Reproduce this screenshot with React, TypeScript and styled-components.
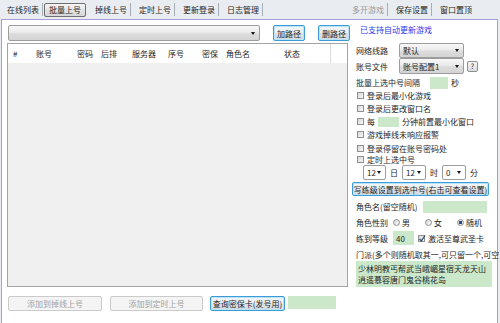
import * as React from 'react';
import styled, { createGlobalStyle } from 'styled-components';

const GlobalStyle = createGlobalStyle`
  html, body {
    margin: 0;
    padding: 0;
    background: #ffffff;
  }
  body {
    font-family: "Noto Sans CJK SC", "Noto Sans", sans-serif;
    font-size: 8px;
    color: #1e1e1e;
  }
`;

const Window = styled.div`
  width: 500px;
  height: 323px;
  background: #e9edf2;
  display: flex;
  flex-direction: column;
  overflow: hidden;
`;

const TabBar = styled.div`
  height: 19px;
  flex: none;
  display: flex;
  align-items: center;
  padding-right: 25px;
`;

const Tab = styled.div<{ $selected?: boolean; $muted?: boolean }>`
  line-height: 13px;
  height: 14px;
  box-sizing: border-box;
  white-space: nowrap;
  color: ${p => (p.$muted ? '#9a9a9a' : '#1e1e1e')};
  padding: ${p => (p.$selected ? '0 4px' : '0 3px 0 8px')};
  margin: ${p => (p.$selected ? '0 1px' : '0')};
  border: ${p => (p.$selected ? '1px solid #6f6f6f' : 'none')};
  border-radius: 2px;
  background: ${p => (p.$selected ? 'linear-gradient(#f6f6f6, #e2e2e2 55%, #d6d6d6)' : 'transparent')};
  display: flex;
  align-items: center;
  &:first-child {
    padding-left: 7px;
  }
`;

const TabSep = styled.div`
  width: 1px;
  height: 13px;
  background: #a8adb5;
`;

const Spacer = styled.div`
  flex: 1;
`;

const Panel = styled.div`
  flex: 1;
  margin: 0 2px 0 1px;
  border: 1px solid #a99ed4;
  border-bottom: none;
  background: #ffffff;
  display: flex;
  padding: 5px 0 0 5px;
`;

const LeftCol = styled.div`
  width: 342px;
  display: flex;
  flex-direction: column;
`;

const PathRow = styled.div`
  display: flex;
  align-items: center;
  gap: 13px;
  padding-left: 1px;
  height: 16px;
`;

const Combo = styled.div<{ $w: number; $h: number; $flat?: boolean }>`
  width: ${p => p.$w}px;
  height: ${p => p.$h}px;
  box-sizing: border-box;
  border: 1px solid #9d9d9d;
  border-radius: 2px;
  background: ${p => (p.$flat ? '#ffffff' : 'linear-gradient(#f8f8f8, #ebebeb 45%, #dcdcdc 55%, #d4d4d4)')};
  display: flex;
  align-items: center;
  padding-left: 3px;
  flex: none;
`;

const ComboText = styled.span`
  flex: 1;
  white-space: nowrap;
  overflow: hidden;
`;

const Arrow = styled.span`
  width: 0;
  height: 0;
  border-left: 2.5px solid transparent;
  border-right: 2.5px solid transparent;
  border-top: 3px solid #151515;
  margin-right: 4px;
`;

const Btn = styled.button<{ $w: number; $h: number; $focus?: boolean }>`
  width: ${p => p.$w}px;
  height: ${p => p.$h}px;
  box-sizing: border-box;
  padding: 0;
  font: inherit;
  font-size: 8px;
  white-space: nowrap;
  flex: none;
  color: ${p => (p.disabled ? '#a2a2a2' : '#1e1e1e')};
  border: 1px solid ${p => (p.disabled ? '#cacaca' : p.$focus ? '#3d9bd6' : '#8e8e8e')};
  border-radius: 2px;
  box-shadow: ${p => (p.$focus ? 'inset 0 0 0 1px #b9e3f8' : 'none')};
  background: ${p =>
    p.disabled
      ? '#f4f4f4'
      : 'linear-gradient(#f4f7f9, #eaeef1 50%, #dde3e7 50%, #d3dadf)'};
`;

const Table = styled.div`
  margin-top: 2px;
  width: 341px;
  height: 244px;
  box-sizing: border-box;
  border: 1px solid #a4a4a4;
  background: #f0f0f0;
  display: flex;
  flex-direction: column;
`;

const HeaderRow = styled.div`
  height: 19px;
  background: #ffffff;
  display: grid;
  grid-template-columns: 23px 41px 24px 31px 36px 34px 24px 58px 52px;
  align-items: stretch;
`;

const HeaderCell = styled.div<{ $edge?: boolean }>`
  display: flex;
  align-items: center;
  padding-left: 5px;
  white-space: nowrap;
  border-right: ${p => (p.$edge ? '1px solid #dcdcdc' : 'none')};
`;

const BottomRow = styled.div`
  margin-top: 9px;
  display: flex;
  align-items: center;
  padding-left: 1px;
`;

const BottomBtnGap = styled.div<{ $w: number }>`
  width: ${p => p.$w}px;
  flex: none;
`;

const GreenBox = styled.div<{ $w: number; $h: number; $ml?: number; $mr?: number; $mt?: number }>`
  width: ${p => p.$w}px;
  height: ${p => p.$h}px;
  margin: ${p => p.$mt ?? 0}px ${p => p.$mr ?? 0}px 0 ${p => p.$ml ?? 0}px;
  background: #cbe8cb;
  flex: none;
  display: flex;
  align-items: center;
  padding-left: 3px;
  box-sizing: border-box;
`;

const RightCol = styled.div`
  width: 140px;
  margin-left: 3px;
  display: flex;
  flex-direction: column;
`;

const Notice = styled.div`
  height: 18px;
  padding-left: 8px;
  color: #2d34f2;
  line-height: 10px;
`;

const FormRow = styled.div<{ $h: number; $pl?: number; $mt?: number }>`
  height: ${p => p.$h}px;
  margin-top: ${p => p.$mt ?? 0}px;
  padding-left: ${p => p.$pl ?? 4}px;
  display: flex;
  align-items: center;
  white-space: nowrap;
`;

const Label = styled.span<{ $w?: number }>`
  width: ${p => (p.$w ? `${p.$w}px` : 'auto')};
  flex: none;
`;

const Unit = styled.span<{ $ml: number; $mr?: number }>`
  margin-left: ${p => p.$ml}px;
  margin-right: ${p => p.$mr ?? 0}px;
`;

const HelpBtn = styled.div`
  width: 11px;
  height: 11px;
  margin-left: 3px;
  box-sizing: border-box;
  border: 1px solid #8e8e8e;
  border-radius: 2px;
  background: linear-gradient(#f6f6f6, #dadada);
  display: flex;
  align-items: center;
  justify-content: center;
  font-size: 7px;
`;

const CheckBox = styled.span`
  width: 7px;
  height: 7px;
  box-sizing: border-box;
  border: 1px solid #8f8f8f;
  background: linear-gradient(135deg, #d8d8d8, #f7f7f7);
  margin-right: 3px;
  flex: none;
  position: relative;
`;

const Tick = styled.svg`
  position: absolute;
  left: -1px;
  top: -2px;
`;

const Radio = styled.span<{ $on?: boolean; $ml: number }>`
  width: 7px;
  height: 7px;
  box-sizing: border-box;
  border-radius: 50%;
  border: 1px solid #8f8f8f;
  background: ${p =>
    p.$on
      ? 'radial-gradient(circle, #1f4d8c 0 1.6px, #e8e8e8 2px)'
      : 'linear-gradient(135deg, #d8d8d8, #f7f7f7)'};
  margin: 0 2px 0 ${p => p.$ml}px;
  flex: none;
`;

const TextArea = styled.div`
  margin: 0 0 0 4px;
  width: 136px;
  height: 26px;
  box-sizing: border-box;
  background: #cbe8cb;
  padding: 2px 2px 0 2px;
  line-height: 11px;
  word-break: break-all;
`;

function Check({ checked }: { checked?: boolean }) {
  return (
    <CheckBox>
      {checked && (
        <Tick width="8" height="9" viewBox="0 0 8 9">
          <path d="M1.5 5 L3.3 7 L7 1.5" fill="none" stroke="#27476f" strokeWidth="1.2" />
        </Tick>
      )}
    </CheckBox>
  );
}

function Select({ w, h, text, flat }: { w: number; h: number; text: string; flat?: boolean }) {
  return (
    <Combo $w={w} $h={h} $flat={flat}>
      <ComboText>{text}</ComboText>
      <Arrow />
    </Combo>
  );
}

const columns = ['#', '账号', '密码', '后排', '服务器', '序号', '密保', '角色名', '状态'];

export default function App() {
  return (
    <Window>
      <GlobalStyle />
      <TabBar>
        <Tab>在线列表</Tab>
        <TabSep />
        <Tab $selected>批量上号</Tab>
        <Tab>掉线上号</Tab>
        <TabSep />
        <Tab>定时上号</Tab>
        <TabSep />
        <Tab>更新登录</Tab>
        <TabSep />
        <Tab>日志管理</Tab>
        <TabSep />
        <Spacer />
        <Tab $muted>多开游戏</Tab>
        <TabSep />
        <Tab>保存设置</Tab>
        <TabSep />
        <Tab>窗口置顶</Tab>
      </TabBar>
      <Panel>
        <LeftCol>
          <PathRow>
            <Select w={252} h={16} text="" />
            <Btn $w={32} $h={16} $focus>加路径</Btn>
            <Btn $w={32} $h={16} $focus>删路径</Btn>
          </PathRow>
          <Table>
            <HeaderRow>
              {columns.map((c, i) => (
                <HeaderCell key={c} $edge={i === columns.length - 1}>{c}</HeaderCell>
              ))}
            </HeaderRow>
          </Table>
          <BottomRow>
            <Btn $w={94} $h={15} disabled>添加到掉线上号</Btn>
            <BottomBtnGap $w={8} />
            <Btn $w={93} $h={15} disabled>添加到定时上号</Btn>
            <BottomBtnGap $w={7} />
            <Btn $w={75} $h={15} $focus>查询密保卡(发号用)</Btn>
            <GreenBox $w={48} $h={13} $ml={3} $mt={-3} />
          </BottomRow>
        </LeftCol>
        <RightCol>
          <Notice>已支持自动更新游戏</Notice>
          <FormRow $h={15}>
            <Label $w={43}>网络线路</Label>
            <Select w={65} h={15} text="默认" />
          </FormRow>
          <FormRow $h={16}>
            <Label $w={43}>账号文件</Label>
            <Select w={65} h={16} text="账号配置1" />
            <HelpBtn>?</HelpBtn>
          </FormRow>
          <FormRow $h={13} $mt={2}>
            <Label $w={74}>批量上选中号间隔</Label>
            <GreenBox $w={18} $h={12} />
            <Unit $ml={3}>秒</Unit>
          </FormRow>
          <FormRow $h={13} $pl={5}>
            <Check />登录后最小化游戏
          </FormRow>
          <FormRow $h={13} $pl={5}>
            <Check />登录后更改窗口名
          </FormRow>
          <FormRow $h={13} $pl={5}>
            <Check />每
            <GreenBox $w={21} $h={10} $ml={3} $mr={3} />
            分钟前置最小化窗口
          </FormRow>
          <FormRow $h={12} $pl={5}>
            <Check />游戏掉线未响应报警
          </FormRow>
          <FormRow $h={12} $pl={5} $mt={2}>
            <Check />登录停留在账号密码处
          </FormRow>
          <FormRow $h={11} $pl={5}>
            <Check />定时上选中号
          </FormRow>
          <FormRow $h={15} $pl={11}>
            <Select w={23} h={15} text="12" flat />
            <Unit $ml={4} $mr={4}>日</Unit>
            <Select w={24} h={15} text="12" flat />
            <Unit $ml={4} $mr={4}>时</Unit>
            <Select w={24} h={15} text="0" flat />
            <Unit $ml={4}>分</Unit>
          </FormRow>
          <FormRow $h={14} $pl={0} $mt={2}>
            <Btn $w={137} $h={14} $focus>写练级设置到选中号(右击可查看设置)</Btn>
          </FormRow>
          <FormRow $h={13} $mt={4}>
            <Label $w={67}>角色名(留空随机)</Label>
            <GreenBox $w={64} $h={12} />
          </FormRow>
          <FormRow $h={14} $mt={2}>
            <Label>角色性别</Label>
            <Radio $ml={5} />男
            <Radio $ml={15} />女
            <Radio $on $ml={15} />随机
          </FormRow>
          <FormRow $h={14} $mt={2}>
            <Label $w={37}>练到等级</Label>
            <GreenBox $w={21} $h={14} $mr={4}>40</GreenBox>
            <Check checked />激活至尊武圣卡
          </FormRow>
          <FormRow $h={14} $mt={2}>
            门派(多个则随机取其一,可只留一个,可空
          </FormRow>
          <TextArea>少林明教丐帮武当峨嵋星宿天龙天山逍遥慕容唐门鬼谷桃花岛</TextArea>
        </RightCol>
      </Panel>
    </Window>
  );
}
